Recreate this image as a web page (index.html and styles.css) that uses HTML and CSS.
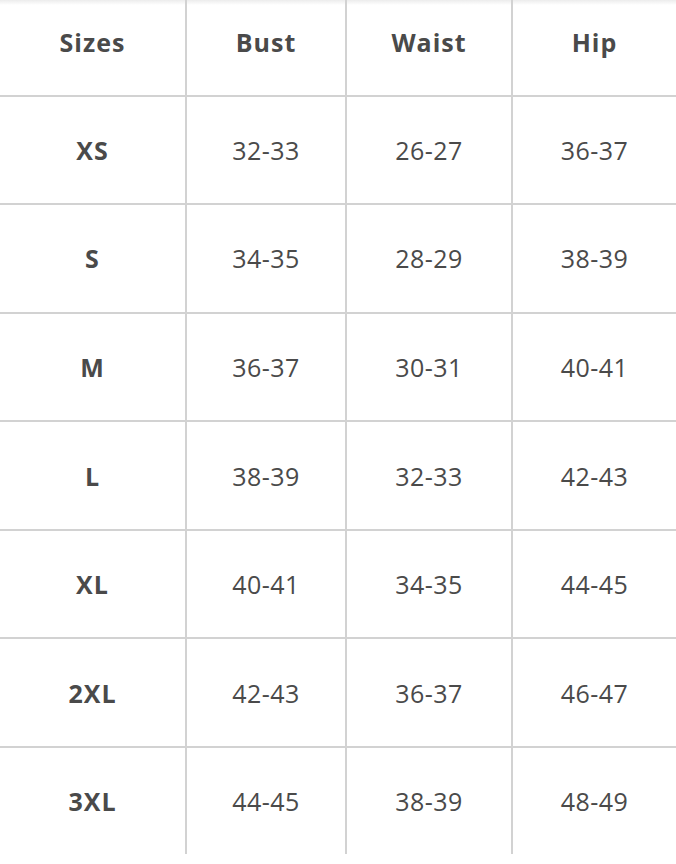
FILE: index.html
```html
<!DOCTYPE html>
<html lang="en">
<head>
<meta charset="utf-8">
<title>Size chart</title>
<link rel="stylesheet" href="styles.css">
</head>
<body>
<div class="chart">
  <div class="row head">
    <div class="cell">Sizes</div>
    <div class="cell">Bust</div>
    <div class="cell">Waist</div>
    <div class="cell">Hip</div>
  </div>
  <div class="row">
    <div class="cell size">XS</div><div class="cell">32-33</div><div class="cell">26-27</div><div class="cell">36-37</div>
  </div>
  <div class="row">
    <div class="cell size">S</div><div class="cell">34-35</div><div class="cell">28-29</div><div class="cell">38-39</div>
  </div>
  <div class="row">
    <div class="cell size">M</div><div class="cell">36-37</div><div class="cell">30-31</div><div class="cell">40-41</div>
  </div>
  <div class="row">
    <div class="cell size">L</div><div class="cell">38-39</div><div class="cell">32-33</div><div class="cell">42-43</div>
  </div>
  <div class="row">
    <div class="cell size">XL</div><div class="cell">40-41</div><div class="cell">34-35</div><div class="cell">44-45</div>
  </div>
  <div class="row">
    <div class="cell size">2XL</div><div class="cell">42-43</div><div class="cell">36-37</div><div class="cell">46-47</div>
  </div>
  <div class="row last">
    <div class="cell size">3XL</div><div class="cell">44-45</div><div class="cell">38-39</div><div class="cell">48-49</div>
  </div>
</div>
</body>
</html>
```

FILE: styles.css
```css
html, body {
  margin: 0;
  padding: 0;
  background: #ffffff;
}

body {
  font-family: "Open Sans", "Noto Sans", sans-serif;
  color: #4a4a4a;
  height: 864px;
  background: linear-gradient(to bottom, #ececec 0px, #ffffff 5px) no-repeat;
}

.chart {
  display: flex;
  flex-direction: column;
}

.row {
  display: grid;
  grid-template-columns: 187px 160px 166px 1fr;
  height: 108.6px;
  border-bottom: 2px solid #d2d2d2;
  box-sizing: border-box;
}

.row.head {
  height: 96.5px;
}

.row.last {
  height: 106px;
  border-bottom: none;
}

.cell {
  display: flex;
  align-items: center;
  justify-content: center;
  font-size: 25px;
  letter-spacing: 0.5px;
  border-right: 2px solid #d2d2d2;
}

.cell:last-child {
  border-right: none;
}

.head .cell {
  font-weight: 700;
  letter-spacing: 1px;
  padding-bottom: 10px;
}

.cell.size {
  font-weight: 700;
  letter-spacing: 1px;
}
```
